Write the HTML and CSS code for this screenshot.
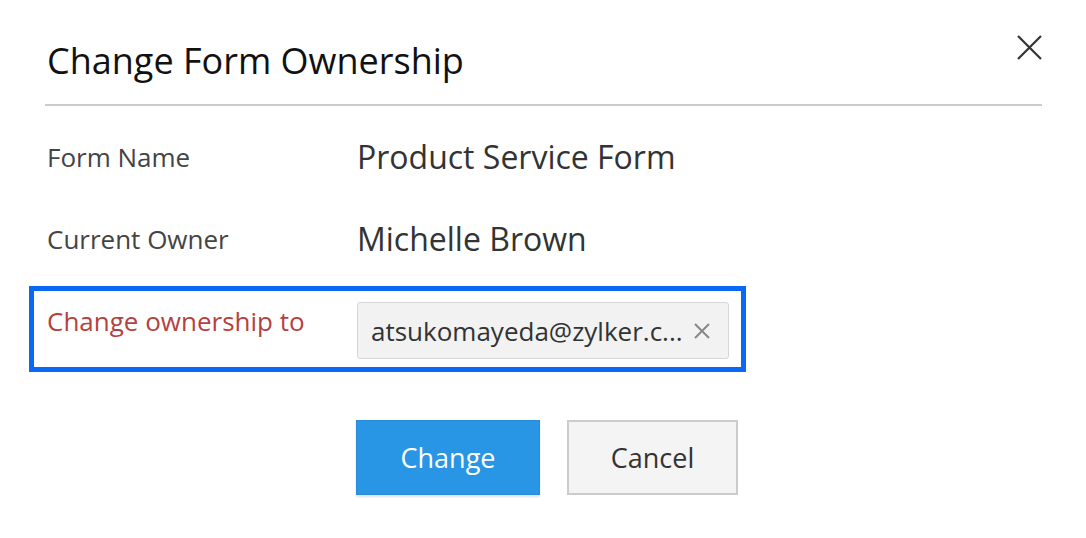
FILE: index.html
```html
<!DOCTYPE html>
<html>
<head>
<meta charset="utf-8">
<link rel="stylesheet" href="styles.css">
</head>
<body>
<div class="dialog">
  <div class="header">
    <h1 class="title">Change Form Ownership</h1>
    <button class="close" aria-label="Close">
      <svg width="25" height="25" viewBox="0 0 25 25"><path d="M1 1L24 24M24 1L1 24" stroke="#333" stroke-width="2.2" fill="none"/></svg>
    </button>
  </div>
  <div class="rows">
    <div class="row">
      <div class="label">Form Name</div>
      <div class="value">Product Service Form</div>
    </div>
    <div class="row">
      <div class="label">Current Owner</div>
      <div class="value">Michelle Brown</div>
    </div>
    <div class="row highlight">
      <div class="label req">Change ownership to</div>
      <div class="chip">
        <span class="chip-text">atsukomayeda@zylker.c...</span>
        <svg class="chip-x" width="16" height="16" viewBox="0 0 16 16"><path d="M1 1L15 15M15 1L1 15" stroke="#888" stroke-width="2" fill="none"/></svg>
      </div>
    </div>
  </div>
  <div class="actions">
    <button class="btn primary">Change</button>
    <button class="btn secondary">Cancel</button>
  </div>
</div>
</body>
</html>
```
FILE: styles.css
```css
html, body {
  margin: 0;
  padding: 0;
  background: #fff;
}
body {
  font-family: "Open Sans", "Liberation Sans", sans-serif;
  width: 1086px;
  height: 538px;
  overflow: hidden;
}
.dialog {
  padding: 0 44px 0 45px;
}
.header {
  display: flex;
  justify-content: space-between;
  align-items: flex-start;
  border-bottom: 2px solid #cccccc;
  height: 106px;
  box-sizing: border-box;
}
.title {
  margin: 38px 0 0 2px;
  font-size: 36px;
  font-weight: 400;
  line-height: 46px;
  color: #111;
}
.close {
  margin-top: 35px;
  padding: 0;
  border: 0;
  background: none;
  width: 25px;
  height: 25px;
  display: block;
}
.close svg { display: block; }
.rows {
  display: flex;
  flex-direction: column;
  padding-top: 31px;
}
.row {
  display: flex;
  align-items: flex-start;
  height: 82px;
}
.label {
  width: 310px;
  flex: none;
  padding-left: 2px;
  font-size: 26px;
  line-height: 40px;
  color: #444;
}
.value {
  font-size: 32px;
  line-height: 40px;
  color: #333;
}
.highlight {
  margin: -15px 0 0 -16px;
  width: 717px;
  height: 86px;
  box-sizing: border-box;
  border: 5px solid #0b68f4;
  padding: 10px 0 0 11px;
}
.req {
  color: #b5413f;
}
.chip {
  margin-top: 1px;
  width: 372px;
  flex: none;
  height: 57px;
  box-sizing: border-box;
  background: #f2f2f2;
  border: 1px solid #d6d6d6;
  border-radius: 3px;
  display: flex;
  align-items: center;
  padding: 0 18px 0 13px;
  justify-content: space-between;
}
.chip-text {
  font-size: 26px;
  color: #333;
}
.chip-x { display: block; }
.actions {
  display: flex;
  gap: 27px;
  padding-left: 311px;
  margin-top: 48px;
}
.btn {
  font-family: "Open Sans", "Liberation Sans", sans-serif;
  font-size: 27px;
  height: 75px;
  box-sizing: border-box;
  cursor: pointer;
}
.primary {
  width: 184px;
  background: #2896e5;
  color: #fff;
  border: 1px solid #2a8bd6;
  box-shadow: 0 2px 2px rgba(0,0,0,0.12);
}
.secondary {
  width: 171px;
  background: #f4f4f4;
  color: #333;
  border: 2px solid #cccccc;
}
```
